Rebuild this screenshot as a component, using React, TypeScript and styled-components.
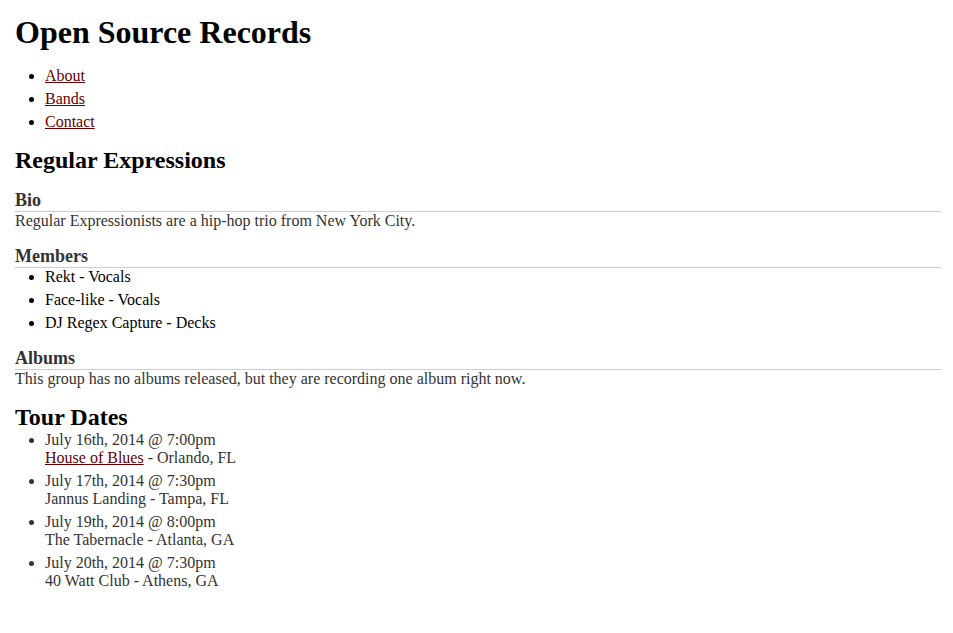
import { createGlobalStyle, styled } from 'styled-components';

const GlobalStyle = createGlobalStyle`
  body {
    margin: 0;
    background: #fff;
    font-family: 'Liberation Serif', 'Times New Roman', serif;
    font-size: 16px;
    color: #000;
  }
`;

const Page = styled.div`
  padding: 14px 12px 15px 15px;
`;

const Title = styled.h1`
  margin: 0 0 16px;
  font-size: 32px;
  font-weight: bold;
`;

const List = styled.ul<{ $muted?: boolean }>`
  margin: 0;
  padding-left: 30px;
  list-style: disc;
  color: ${(p) => (p.$muted ? '#333' : '#000')};

  li {
    margin-bottom: 5px;
  }
`;

const NavList = styled(List)`
  margin-bottom: 16px;
`;

const Link = styled.a`
  color: #660000;
  text-decoration: underline;
`;

const SectionTitle = styled.h2<{ $spaced?: boolean }>`
  margin: ${(p) => (p.$spaced ? '0 0 16px' : '16px 0 0')};
  font-size: 24px;
  font-weight: bold;
  color: #000;
`;

const SubTitle = styled.h3<{ $first?: boolean }>`
  margin: ${(p) => (p.$first ? '0' : '16px 0 0')};
  font-size: 18px;
  font-weight: bold;
  color: #333;
  border-bottom: 1px solid #ccc;
`;

const Text = styled.p`
  margin: 0;
  color: #333;
`;

const members = ['Rekt - Vocals', 'Face-like - Vocals', 'DJ Regex Capture - Decks'];

const tours = [
  { date: 'July 16th, 2014 @ 7:00pm', venue: 'House of Blues', place: 'Orlando, FL', link: true },
  { date: 'July 17th, 2014 @ 7:30pm', venue: 'Jannus Landing', place: 'Tampa, FL' },
  { date: 'July 19th, 2014 @ 8:00pm', venue: 'The Tabernacle', place: 'Atlanta, GA' },
  { date: 'July 20th, 2014 @ 7:30pm', venue: '40 Watt Club', place: 'Athens, GA' },
];

const App = () => {
  return (
    <>
      <GlobalStyle />
      <Page>
        <Title>Open Source Records</Title>
        <NavList>
          <li><Link href="#">About</Link></li>
          <li><Link href="#">Bands</Link></li>
          <li><Link href="#">Contact</Link></li>
        </NavList>

        <SectionTitle $spaced>Regular Expressions</SectionTitle>

        <SubTitle $first>Bio</SubTitle>
        <Text>Regular Expressionists are a hip-hop trio from New York City.</Text>

        <SubTitle>Members</SubTitle>
        <List>
          {members.map((m) => (
            <li key={m}>{m}</li>
          ))}
        </List>

        <SubTitle>Albums</SubTitle>
        <Text>This group has no albums released, but they are recording one album right now.</Text>

        <SectionTitle>Tour Dates</SectionTitle>
        <List $muted>
          {tours.map((t) => (
            <li key={t.date}>
              {t.date}
              <br />
              {t.link ? <Link href="#">{t.venue}</Link> : t.venue} - {t.place}
            </li>
          ))}
        </List>
      </Page>
    </>
  );
};

export default App;
